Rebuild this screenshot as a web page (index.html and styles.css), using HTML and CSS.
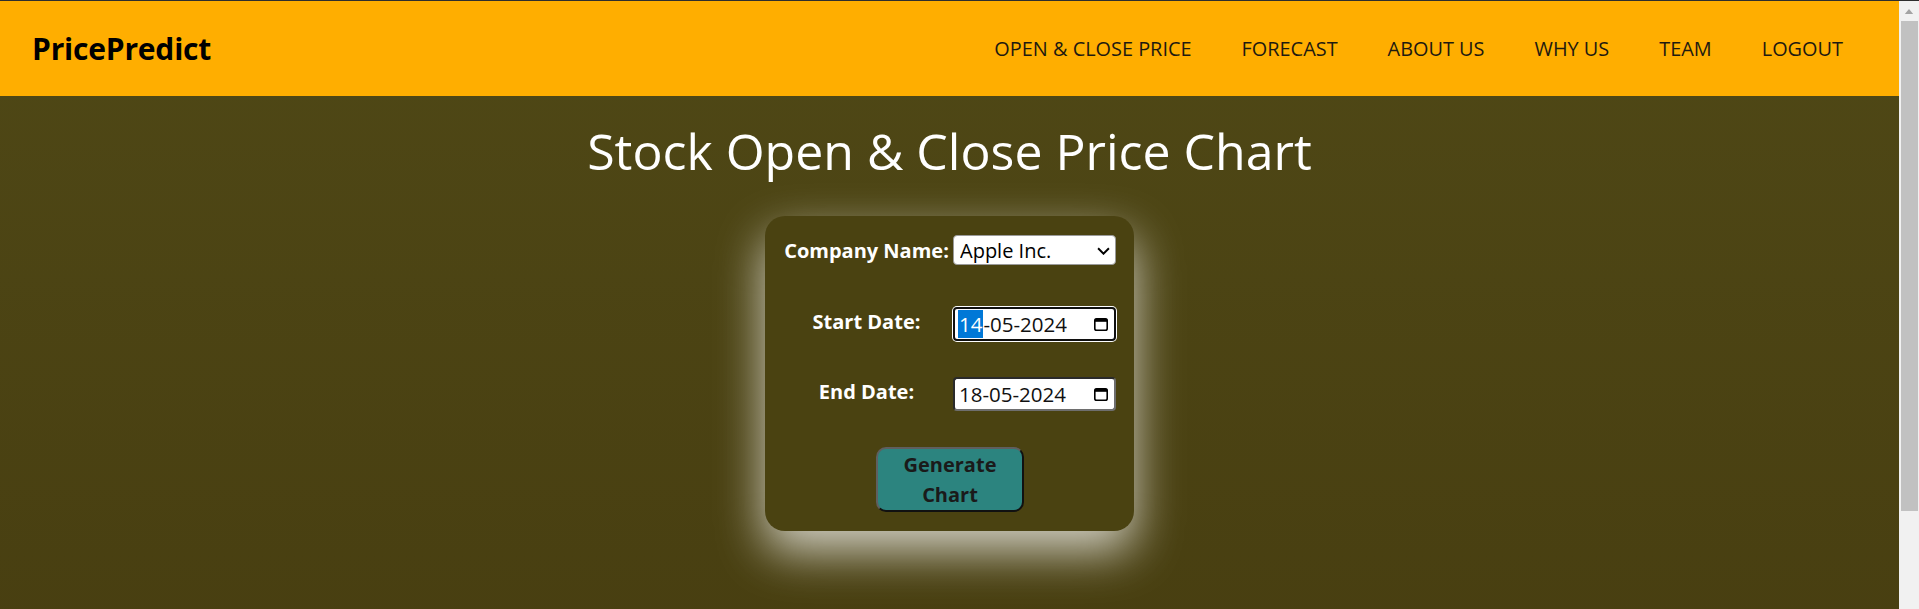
FILE: index.html
```html
<!DOCTYPE html>
<html lang="en">
<head>
<meta charset="utf-8">
<title>PricePredict – Open &amp; Close Price</title>
<link rel="stylesheet" href="styles.css">
</head>
<body>
<header class="topbar">
  <a class="brand" href="#">PricePredict</a>
  <nav class="nav">
    <a class="nav-link" href="#">OPEN &amp; CLOSE PRICE</a>
    <a class="nav-link" href="#">FORECAST</a>
    <a class="nav-link" href="#">ABOUT US</a>
    <a class="nav-link" href="#">WHY US</a>
    <a class="nav-link" href="#">TEAM</a>
    <a class="nav-link" href="#">LOGOUT</a>
  </nav>
</header>
<main class="page">
  <h1 class="page-title">Stock Open &amp; Close Price Chart</h1>
  <form class="chart-form">
    <label class="field-label first-label" for="company">Company Name:</label>
    <div class="select-wrap">
      <select id="company" class="field-select">
        <option>Apple Inc.</option>
        <option>Microsoft Corp.</option>
        <option>Alphabet Inc.</option>
      </select>
      <svg class="chevron" viewBox="0 0 12 7" aria-hidden="true"><path d="M1 1l5 5 5-5" fill="none" stroke="#000" stroke-width="1.8"/></svg>
    </div>

    <label class="field-label row-gap-top">Start Date:</label>
    <div class="date-field is-focused row-gap-top">
      <span class="date-text"><span class="seg-selected">14</span>-05-2024</span>
      <svg class="cal-icon" viewBox="0 0 16 16" aria-hidden="true"><rect x="1.8" y="2.8" width="12.4" height="11.4" rx="1.8" fill="none" stroke="#000" stroke-width="1.6"/><rect x="1.8" y="2.8" width="12.4" height="3" fill="#000"/></svg>
    </div>

    <label class="field-label">End Date:</label>
    <div class="date-field">
      <span class="date-text">18-05-2024</span>
      <svg class="cal-icon" viewBox="0 0 16 16" aria-hidden="true"><rect x="1.8" y="2.8" width="12.4" height="11.4" rx="1.8" fill="none" stroke="#000" stroke-width="1.6"/><rect x="1.8" y="2.8" width="12.4" height="3" fill="#000"/></svg>
    </div>

    <button class="generate-btn" type="button">Generate Chart</button>
  </form>
  <div class="chart-area"></div>
</main>
<div class="scrollbar" aria-hidden="true">
  <svg class="scroll-arrow" viewBox="0 0 10 6"><path d="M5 0L10 6H0z" fill="#a3a3a3"/></svg>
  <div class="scroll-thumb"></div>
</div>
</body>
</html>
```

FILE: styles.css
```css
html {
  background: #473e10;
}

body {
  margin: 0;
  padding-right: 20px;
  border-top: 1px solid #2e2e2e;
  font-family: "Open Sans", "DejaVu Sans", sans-serif;
  background: linear-gradient(#4f4816, #463c0f);
  min-height: 830px;
}

.topbar {
  height: 95px;
  background: #ffae00;
  display: flex;
  align-items: center;
  justify-content: space-between;
  padding: 0 56px 0 32px;
}

.brand {
  font-size: 30px;
  font-weight: 700;
  color: #000;
  text-decoration: none;
  letter-spacing: -0.2px;
}

.nav {
  display: flex;
  gap: 50px;
}

.nav-link {
  font-size: 19.9px;
  color: #1e1a10;
  text-decoration: none;
}

.page {
  display: flex;
  flex-direction: column;
  align-items: center;
}

.page-title {
  margin: 21px 0 31px;
  font-size: 50px;
  font-weight: 400;
  line-height: 68px;
  color: #fff;
}

.chart-form {
  display: grid;
  grid-template-columns: 165px 163px;
  column-gap: 4px;
  row-gap: 36px;
  align-items: center;
  padding: 19px 18px 19px 19px;
  background: #4a4211;
  border-radius: 20px;
  box-shadow: 0 20px 48px rgba(255, 255, 255, 0.75);
}

.field-label {
  font-size: 20px;
  font-weight: 700;
  color: #fff;
  text-align: center;
  line-height: 28px;
  margin-top: -4px;
}

.field-label.first-label {
  margin-top: 2px;
}

.row-gap-top {
  margin-top: 6px;
}
.field-label.row-gap-top {
  margin-top: 2px;
}

.select-wrap {
  position: relative;
  height: 30px;
}

.field-select {
  appearance: none;
  -webkit-appearance: none;
  width: 100%;
  height: 30px;
  margin: 0;
  padding: 0 28px 0 6px;
  font-family: "Open Sans", "DejaVu Sans", sans-serif;
  font-size: 20px;
  color: #000;
  background: #fff;
  border: 1px solid #9a9a9a;
  border-radius: 4px;
}

.chevron {
  position: absolute;
  right: 6px;
  top: 12px;
  width: 13px;
  height: 8px;
  pointer-events: none;
}

.date-field {
  display: flex;
  align-items: center;
  justify-content: space-between;
  box-sizing: border-box;
  height: 34px;
  padding: 0 5px 0 3px;
  background: #fff;
  border: 2px solid;
  border-color: #2a2a2a #6e6e6e #6e6e6e #2a2a2a;
  border-radius: 4px;
}

.date-field.is-focused {
  border-color: #101010;
  box-shadow: 0 0 0 1px #ffffff;
}

.date-text {
  font-size: 20.5px;
  line-height: 28px;
  color: #111;
  padding-left: 1px;
}

.seg-selected {
  display: inline-block;
  background: #0078d7;
  color: #fff;
  margin-left: -1px;
  padding: 0 1px;
}

.cal-icon {
  width: 16px;
  height: 16px;
}

.generate-btn {
  grid-column: 1 / span 2;
  justify-self: center;
  width: 148px;
  height: 65px;
  padding: 0;
  font-family: "Open Sans", "DejaVu Sans", sans-serif;
  font-size: 20px;
  font-weight: 700;
  line-height: 30px;
  color: #1a1a1a;
  background: #2c847f;
  border: 2px solid;
  border-color: #5f5f5f #111 #111 #5f5f5f;
  border-radius: 10px;
}

.chart-area {
  height: 260px;
}

.scrollbar {
  position: fixed;
  top: 1px;
  right: 0;
  bottom: 0;
  width: 20px;
  background: #f1f1f1;
}

.scroll-arrow {
  position: absolute;
  top: 8px;
  left: 5px;
  width: 10px;
  height: 5px;
}

.scroll-thumb {
  position: absolute;
  top: 20px;
  left: 2px;
  width: 17px;
  height: 490px;
  background: #c1c1c1;
}
```
